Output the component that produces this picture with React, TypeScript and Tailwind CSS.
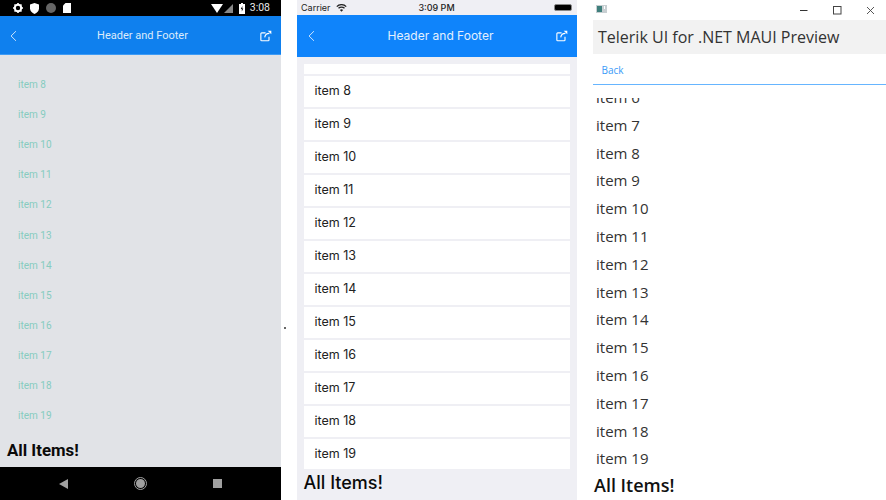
const range = (a: number, b: number) => Array.from({ length: b - a + 1 }, (_, i) => a + i);

function Share({ size = 12 }: { size?: number }) {
  return (
    <svg width={size} height={size} viewBox="0 0 14 14" fill="none" stroke="currentColor" strokeWidth="1.3">
      <path d="M10.5 8v3.6a1 1 0 0 1-1 1H2a1 1 0 0 1-1-1V4.400a1 1 0 0 1 1-1h4.500" />
      <path d="M5.500 8.500C6 5.500 8 4 11 4" />
      <path d="M9 .8h4.200V5z" fill="currentColor" stroke="none" />
    </svg>
  );
}

function Chevron() {
  return (
    <svg width="7" height="12" viewBox="0 0 8 13" fill="none" stroke="currentColor" strokeWidth="0.9">
      <path d="M6.800 1 1.200 6.500l5.600 5.500" />
    </svg>
  );
}

function AndroidPane() {
  return (
    <div className="flex h-[500px] w-[281px] shrink-0 flex-col bg-[#e1e3e7] font-['Roboto',sans-serif]">
      <div className="flex h-[16px] items-center justify-between bg-black pl-[13px] pr-[11px] text-white">
        <div className="flex items-center gap-[7px]">
          <svg width="10" height="10" viewBox="0 0 10 10">
            <circle cx="5" cy="5" r="3.200" fill="none" stroke="#fff" strokeWidth="2" />
            <path d="M5 0v2M5 8v2M0 5h2M8 5h2M1.500 1.500l1.400 1.400M7.100 7.100l1.400 1.400M8.500 1.500 7.100 2.900M2.900 7.100 1.500 8.500" stroke="#fff" strokeWidth="1.600" />
          </svg>
          <svg width="9" height="11" viewBox="0 0 9 11"><path d="M4.500 0 9 1.600v3.600c0 2.800-2 4.800-4.500 5.800C2 10 0 8 0 5.200V1.600z" fill="#fff" /></svg>
          <span className="h-[10px] w-[10px] rounded-full bg-[#666]" />
          <svg width="8" height="10" viewBox="0 0 8 10"><path d="M2.500 0H8v10H0V2.500z" fill="#fff" /></svg>
        </div>
        <div className="flex items-center">
          <svg width="12" height="9" viewBox="0 0 12 9"><path d="M0 0h12L6 9z" fill="#fff" /></svg>
          <svg className="ml-[1px]" width="9" height="9" viewBox="0 0 9 9"><path d="M9 0v9H0z" fill="#888" /></svg>
          <svg className="ml-[6px]" width="6" height="11" viewBox="0 0 6 11"><path d="M2 0h2v1h2v10H0V1h2z" fill="#fff" /><path d="M3.400 3 1.800 6h1v2.500L4.300 5.500h-1z" fill="#000" /></svg>
          <span className="ml-[5px] text-[10.5px] leading-none text-[#e8e8e8]">3:08</span>
        </div>
      </div>
      <div className="flex h-[39px] items-center justify-between border-b border-[#3d9bf5] bg-[#0f80ee] pl-[10px] pr-[9px] pt-[2px] text-white">
        <Chevron />
        <span className="pl-[8px] text-[11px] text-[#dcebfb]">Header and Footer</span>
        <Share />
      </div>
      <div className="flex flex-1 flex-col pl-[18px] pt-[14.500px]">
        {range(8, 19).map((n) => (
          <div key={n} className="flex h-[30.100px] items-center text-[10px] text-[#86ccc0]">
            item {n}
          </div>
        ))}
      </div>
      <div className="pb-[6px] pl-[7px] text-[16.800px] font-bold leading-[22px] text-[#0a0a0a]">All Items!</div>
      <div className="flex h-[33px] items-center justify-center gap-[66px] bg-black">
        <svg width="9" height="10" viewBox="0 0 9 10"><path d="M9 0v10L0 5z" fill="#a0a0a0" /></svg>
        <svg width="13" height="13" viewBox="0 0 13 13"><circle cx="6.500" cy="6.500" r="6" fill="none" stroke="#a0a0a0" /><circle cx="6.500" cy="6.500" r="4.500" fill="#a0a0a0" /></svg>
        <span className="h-[9px] w-[9px] bg-[#a0a0a0]" />
      </div>
    </div>
  );
}

function IosPane() {
  return (
    <div className="flex h-[500px] w-[280px] shrink-0 flex-col bg-[#efeff4] font-['Inter',sans-serif]">
      <div className="flex h-[15px] items-center justify-between pl-[4px] pr-[5px] text-[#222]">
        <div className="flex w-[60px] items-center gap-[5px] text-[9px] leading-none">
          Carrier
          <svg width="11" height="8" viewBox="0 0 11 8" fill="none" stroke="#222" strokeWidth="1.300">
            <path d="M.8 2.600a6.600 6.600 0 0 1 9.400 0M2.500 4.300a4.200 4.200 0 0 1 6 0" />
            <path d="M5.500 7.800 3.900 6a2.200 2.200 0 0 1 3.200 0z" fill="#222" stroke="none" />
          </svg>
        </div>
        <span className="text-[9px] font-medium leading-none">3:09 PM</span>
        <div className="flex w-[60px] justify-end">
          <span className="h-[7px] w-[18px] rounded-[2px] border border-[#888] bg-black" />
        </div>
      </div>
      <div className="flex h-[42px] items-center justify-between bg-[#0f84fb] pl-[11px] pr-[9px] text-white">
        <Chevron />
        <span className="pl-[10px] text-[12px] text-[#e3f0fe]">Header and Footer</span>
        <Share />
      </div>
      <div className="ml-[6.500px] mr-[7.500px] mt-[7px] flex h-[405px] flex-col gap-[2px] overflow-hidden">
        <div className="h-[10px] shrink-0 bg-white" />
        {range(8, 19).map((n) => (
          <div key={n} className="flex h-[31px] shrink-0 items-center bg-white pl-[11px] text-[12.500px] text-[#222]">
            item {n}
          </div>
        ))}
      </div>
      <div className="pl-[6.500px] pt-[2.500px] text-[18px] font-medium leading-[22px] text-[#0a0a0a]">All Items!</div>
    </div>
  );
}

function WindowsPane() {
  return (
    <div className="flex h-[500px] min-w-0 flex-1 flex-col overflow-hidden bg-white font-['Open_Sans',sans-serif]">
      <div className="flex h-[20px] shrink-0 items-center justify-between pl-[3px]">
        <svg className="mb-[2px]" width="11" height="8" viewBox="0 0 11 8">
          <rect width="11" height="8" fill="#c8cfd2" />
          <rect x="1" y="1" width="5" height="6" fill="#3f7f7c" />
          <rect x="8" y="1" width="1" height="3" fill="#fff" />
        </svg>
        <div className="flex items-center gap-[24.500px] pr-[11px]">
          <svg width="9" height="9" viewBox="0 0 9 9"><path d="M1 4.500h7.500" stroke="#333" /></svg>
          <svg width="9" height="9" viewBox="0 0 9 9"><rect x=".5" y=".5" width="7.500" height="7.500" fill="none" stroke="#444" /></svg>
          <svg width="9" height="9" viewBox="0 0 9 9"><path d="M1 1l7 7M8 1 1 8" stroke="#444" strokeWidth=".9" /></svg>
        </div>
      </div>
      <div className="flex h-[34px] shrink-0 items-center bg-[#f2f2f2] pl-[5px] text-[16px] leading-none text-[#333]">
        Telerik UI for .NET MAUI Preview
      </div>
      <div className="flex h-[30.500px] shrink-0 items-center border-b border-[#66b5ff] pl-[8.500px] pt-[4px] text-[10px] text-[#3a9bf8]">Back</div>
      <div className="mt-[13.500px] flex h-[374px] shrink-0 flex-col overflow-hidden pl-[3px]">
        {range(6, 19).map((n, i) => (
          <div
            key={n}
            className={`flex h-[27.800px] shrink-0 items-center text-[15px] text-[#333] ${i === 0 ? "mt-[-14.700px]" : ""}`}
          >
            item {n}
          </div>
        ))}
      </div>
      <div className="pl-[1px] pt-[1px] text-[18px] font-semibold leading-[24px] text-[#111]">All Items!</div>
    </div>
  );
}

export default function App() {
  return (
    <div className="flex h-[500px] w-[886px] overflow-hidden bg-white">
      <AndroidPane />
      <div className="flex w-[16px] shrink-0 items-center pl-[3px]">
        <span className="mt-[156px] h-[2px] w-[2px] rounded-full bg-[#333]" />
      </div>
      <IosPane />
      <div className="w-[16px] shrink-0" />
      <WindowsPane />
    </div>
  );
}
